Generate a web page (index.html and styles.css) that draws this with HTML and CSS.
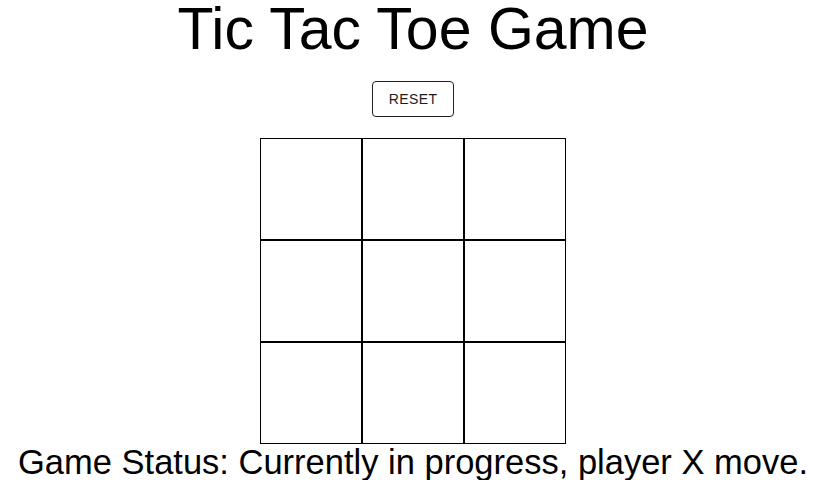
FILE: index.html
```html
<!DOCTYPE html>
<html lang="en">
<head>
<meta charset="utf-8">
<title>Tic Tac Toe Game</title>
<link rel="stylesheet" href="styles.css">
</head>
<body>
<main class="game">
  <h1 class="title">Tic Tac Toe Game</h1>
  <button class="reset" type="button">RESET</button>
  <div class="board">
    <div class="cell"></div>
    <div class="cell"></div>
    <div class="cell"></div>
    <div class="cell"></div>
    <div class="cell"></div>
    <div class="cell"></div>
    <div class="cell"></div>
    <div class="cell"></div>
    <div class="cell"></div>
  </div>
  <p class="status">Game Status: Currently in progress, player X move.</p>
</main>
</body>
</html>
```

FILE: styles.css
```css
html, body {
  margin: 0;
  padding: 0;
  background: #ffffff;
}

body {
  font-family: "Liberation Sans", Arial, sans-serif;
  color: #000000;
}

.game {
  width: 826px;
  display: flex;
  flex-direction: column;
  align-items: center;
}

.title {
  margin: 0;
  font-size: 59px;
  line-height: 59px;
  font-weight: normal;
}

.reset {
  margin-top: 22px;
  width: 82px;
  height: 36px;
  box-sizing: border-box;
  border: 1px solid #222222;
  border-radius: 4px;
  background: #ffffff;
  font-family: "Liberation Sans", Arial, sans-serif;
  font-size: 14px;
  letter-spacing: 0.4px;
  color: #1c1c1c;
  padding: 0;
}

.board {
  margin-top: 21px;
  display: grid;
  grid-template-columns: repeat(3, 102px);
  grid-template-rows: repeat(3, 102px);
}

.cell {
  border: 1px solid #000000;
  background: #ffffff;
}

.status {
  margin: 0;
  font-size: 34.5px;
  line-height: 36px;
}
```
